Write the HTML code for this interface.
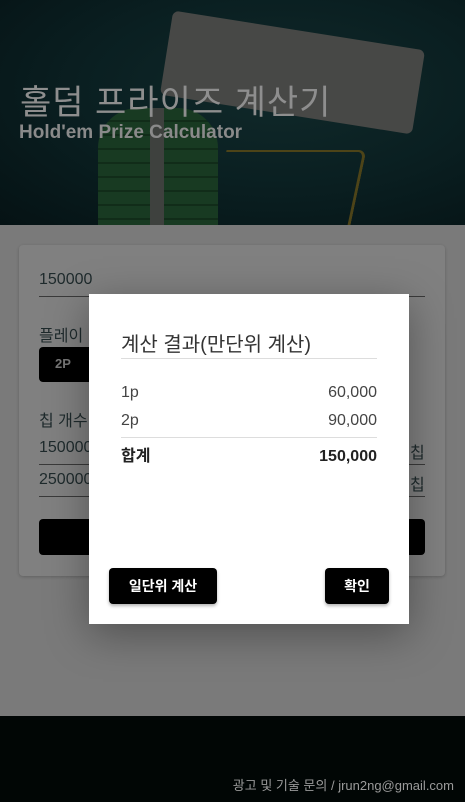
<!DOCTYPE html>
<html><head><meta charset="utf-8"><style>
*{margin:0;padding:0;box-sizing:border-box}
body{width:465px;height:802px;overflow:hidden;background:#7a7a7a;font-family:"Liberation Sans","Noto Sans CJK KR",sans-serif;position:relative}
.hdr{position:absolute;left:0;top:0;width:465px;height:225px;background:radial-gradient(ellipse at 60% 40%,#10292a 0%,#0a1f21 50%,#051214 100%);overflow:hidden}
.cardimg{position:absolute;left:165px;top:30px;width:255px;height:85px;background:#474846;transform:rotate(9deg);border-radius:6px}
.chips{position:absolute;left:98px;top:108px;width:120px;height:120px;background:repeating-linear-gradient(180deg,#183a22 0 12px,#112c19 12px 14px);border-radius:40px 40px 0 0}
.chips:after{content:"";position:absolute;left:52px;top:0;width:14px;height:120px;background:#3e413e}
.line{position:absolute;left:218px;top:150px;width:140px;height:80px;border-top:2px solid #4d4418;border-right:3px solid #4d4418;border-radius:0 8px 0 0;transform:skewX(-12deg)}
.t1{position:absolute;left:20px;top:75px;font-size:34px;color:#8e8e8e;letter-spacing:1px}
.t2{position:absolute;left:19px;top:122px;font-size:19px;font-weight:bold;color:#8a8a8a}
.card{position:absolute;left:19px;top:245px;width:426px;height:331px;background:#808080;border-radius:4px;box-shadow:0 1px 3px rgba(0,0,0,.2)}
.u{position:absolute;font-size:16px;color:#1e2a2c}
.ln{position:absolute;left:39px;width:386px;height:1px;background:#3a3a3a}
.blk{position:absolute;background:#000;border-radius:4px}
.ftr{position:absolute;left:0;top:716px;width:465px;height:86px;background:#010605}
.ftr span{position:absolute;right:11px;top:59px;font-size:13px;color:#9a9a9a}
.modal{position:absolute;left:89px;top:294px;width:320px;height:330px;background:#fff;box-shadow:0 10px 40px rgba(0,0,0,.35)}
.mt{position:absolute;left:32px;top:34px;font-size:20px;color:#333}
.hr{position:absolute;left:32px;width:256px;height:1px;background:#ddd}
.r{position:absolute;left:32px;width:256px;font-size:16px;color:#444;display:flex;justify-content:space-between;align-items:baseline}
.btn{position:absolute;top:274px;height:36px;background:#000;color:#fff;font-size:14px;font-weight:bold;border-radius:4px;display:flex;align-items:center;justify-content:center;box-shadow:0 2px 3px rgba(0,0,0,.3)}
</style></head><body>
<div class="hdr"><div class="cardimg"></div><div class="line"></div><div class="chips"></div>
<div class="t1">홀덤 프라이즈 계산기</div><div class="t2">Hold'em Prize Calculator</div></div>
<div class="card"></div>
<div class="u" style="left:39px;top:271px">150000</div><div class="ln" style="top:296px"></div>
<div class="u" style="left:39px;top:322px">플레이</div>
<div class="blk" style="left:39px;top:347px;width:60px;height:35px"></div><div class="u" style="left:55px;top:356px;font-size:13px;font-weight:bold;color:#777">2P</div>
<div class="u" style="left:39px;top:407px">칩 개수</div>
<div class="u" style="left:39px;top:439px">150000</div><div class="u" style="left:410px;top:439px">칩</div><div class="ln" style="top:464px"></div>
<div class="u" style="left:39px;top:471px">250000</div><div class="u" style="left:410px;top:471px">칩</div><div class="ln" style="top:496px"></div>
<div class="blk" style="left:39px;top:519px;width:386px;height:36px"></div>
<div class="ftr"><span>광고 및 기술 문의 / jrun2ng@gmail.com</span></div>
<div class="modal">
<div class="mt">계산 결과(만단위 계산)</div>
<div class="hr" style="top:64px"></div>
<div class="r" style="top:90px"><span>1p</span><span>60,000</span></div>
<div class="r" style="top:118px"><span>2p</span><span>90,000</span></div>
<div class="hr" style="top:143px"></div>
<div class="r" style="top:148px;font-weight:bold;color:#222"><span>합계</span><span>150,000</span></div>
<div class="btn" style="left:20px;width:108px">일단위 계산</div>
<div class="btn" style="left:236px;width:64px">확인</div>
</div>
</body></html>
